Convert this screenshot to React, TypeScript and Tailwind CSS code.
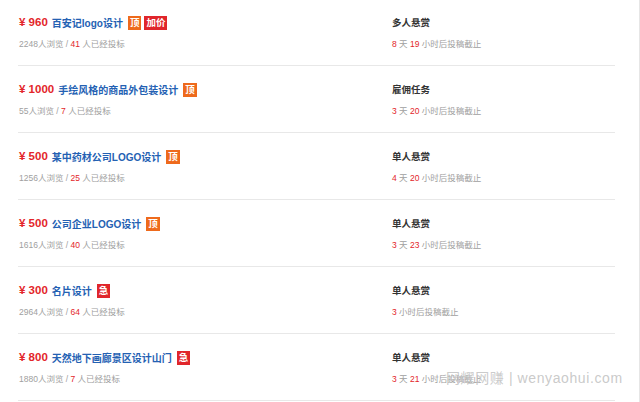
const tasks = [
  { price: 960, title: '百安记logo设计', tags: ['顶', '加价'], views: 2248, bids: 41, type: '多人悬赏', days: 8, hours: 19 },
  { price: 1000, title: '手绘风格的商品外包装设计', tags: ['顶'], views: 55, bids: 7, type: '雇佣任务', days: 3, hours: 20 },
  { price: 500, title: '某中药材公司LOGO设计', tags: ['顶'], views: 1256, bids: 25, type: '单人悬赏', days: 4, hours: 20 },
  { price: 500, title: '公司企业LOGO设计', tags: ['顶'], views: 1616, bids: 40, type: '单人悬赏', days: 3, hours: 23 },
  { price: 300, title: '名片设计', tags: ['急'], views: 2964, bids: 64, type: '单人悬赏', days: null, hours: 3 },
  { price: 800, title: '天然地下画廊景区设计山门', tags: ['急'], views: 1880, bids: 7, type: '单人悬赏', days: 3, hours: 21 },
];

function Tag({ text }: { text: string }) {
  const color = text === '顶' ? 'bg-[#ee6a1c]' : 'bg-[#e0262b]';
  return (
    <span className={`${color} text-white text-[9.5px] leading-[14px] h-[14px] px-[2px] ml-[3px] inline-block`}>
      {text}
    </span>
  );
}

export default function App() {
  return (
    <div
      className="relative w-[640px] h-[402px] overflow-hidden bg-white border-r border-[#e6e6e6]"
      style={{ fontFamily: '"Liberation Sans", "Noto Sans CJK SC", sans-serif' }}
    >
      <div className="w-[597px] ml-[18px] -mt-px">
        {tasks.map((t, i) => (
          <div key={i} className="flex h-[67px] border-b border-[#e8e8e8]">
            <div className="w-[374px] pl-px pt-[16px]">
              <div className="flex items-center h-[16px] font-bold">
                <span className="text-[#e3262a] text-[11.5px] mr-[4px]">¥ {t.price}</span>
                <span className="text-[#2461b3] text-[10px] mr-[2px]">{t.title}</span>
                {t.tags.map(tag => (
                  <Tag key={tag} text={tag} />
                ))}
              </div>
              <div className="mt-[7px] h-[12px] leading-[12px] text-[8.5px] text-[#a0a0a0]">
                {t.views}人浏览 / <span className="text-[#e3262a]">{t.bids}</span> 人已经投标
              </div>
            </div>
            <div className="pt-[16px]">
              <div className="h-[16px] leading-[16px] text-[9.5px] font-bold text-[#333]">{t.type}</div>
              <div className="mt-[7px] h-[12px] leading-[12px] text-[8.5px] text-[#a0a0a0]">
                {t.days !== null && (
                  <>
                    <span className="text-[#e3262a]">{t.days}</span> 天{' '}
                  </>
                )}
                <span className="text-[#e3262a]">{t.hours}</span> 小时后投稿截止
              </div>
            </div>
          </div>
        ))}
      </div>

      {/* watermark */}
      <div className="absolute left-[446px] top-[368px] text-[14px] leading-[20px] text-[#c4c4c4]/90 tracking-[0.6px]">
        网耀网赚 | wenyaohui.com
      </div>
    </div>
  );
}
